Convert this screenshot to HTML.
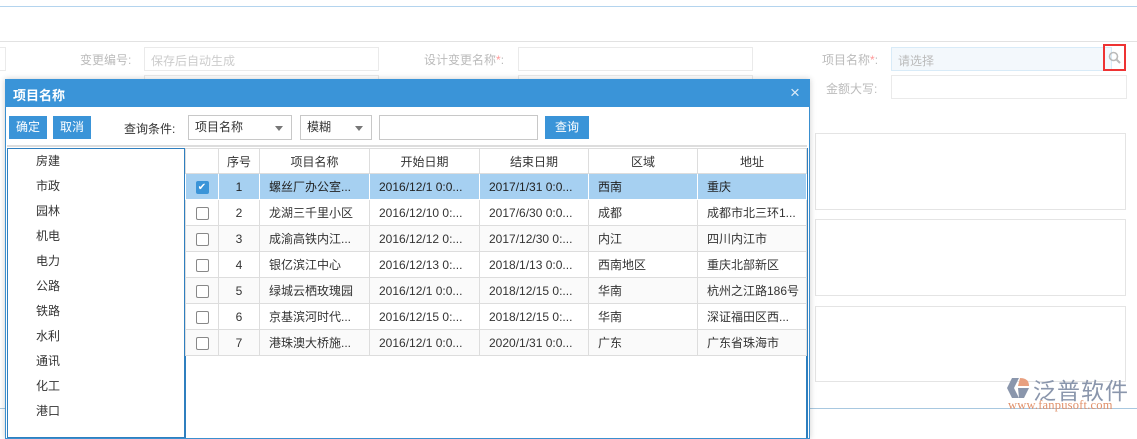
<!DOCTYPE html>
<html><head><meta charset="utf-8"><style>
*{box-sizing:border-box;margin:0;padding:0}
body{width:1137px;height:420px;overflow:hidden;background:#fff;font-family:"Liberation Sans","Noto Sans CJK SC",sans-serif;font-size:12px;position:relative;color:#333}
.a{position:absolute}
.lbl{color:#bbb;font-size:12px}
.inp{border:1px solid #eaeaea;background:#fff}
.box{border:1px solid #e4e4e4}
.btn{background:#3a94d8;color:#fff;text-align:center;line-height:23px;height:23px}
.sel{border:1px solid #c8c8c8;height:25px;line-height:23px;padding-left:6px;color:#333;background:#fff}
.tri{position:absolute;right:8px;top:10px;width:0;height:0;border-left:4px solid transparent;border-right:4px solid transparent;border-top:5px solid #777}
table{border-collapse:collapse;position:absolute;left:185px;top:148px;table-layout:fixed;width:621px}
td{border:1px solid #ddd;height:26px;padding:0 0 0 9px;white-space:nowrap;overflow:hidden;font-size:12px}
.hd td{text-align:center;background:#fff;height:25px;padding:0}
tr.sel1 td{background:#a6d0f1;border-color:#fff;color:#222}
.cb{display:inline-block;width:13px;height:13px;border:1px solid #888;border-radius:2px;vertical-align:middle;background:#fff}
.cbk{background:#3a94d8;border-color:#3a94d8;color:#fff;font-size:10px;line-height:11px;text-align:center}
.c{text-align:center;padding:0!important}
.tree div{height:25px;line-height:25px;padding-left:28px}
</style></head><body>
<div class="a" style="left:0;top:6px;width:1137px;height:1px;background:#b4d4ee"></div>
<div class="a" style="left:0;top:41px;width:1137px;height:1px;background:#e2e2e2"></div>
<div class="a inp" style="left:-5px;top:47px;width:11px;height:24px"></div>
<div class="a lbl" style="left:80px;top:51px">变更编号:</div>
<div class="a inp" style="left:144px;top:47px;width:235px;height:24px;color:#ccc;padding:4px 6px">保存后自动生成</div>
<div class="a inp" style="left:144px;top:75px;width:235px;height:24px"></div>
<div class="a lbl" style="left:424px;top:51px">设计变更名称<span style="color:#f99">*</span>:</div>
<div class="a inp" style="left:518px;top:47px;width:235px;height:24px"></div>
<div class="a inp" style="left:518px;top:75px;width:235px;height:24px"></div>
<div class="a lbl" style="left:822px;top:51px">项目名称<span style="color:#f99">*</span>:</div>
<div class="a" style="left:891px;top:47px;width:221px;height:24px;border:1px solid #d8ebf8;background:#f3f8fc;color:#bbb;padding:4px 6px">请选择</div>
<div class="a" style="left:1103px;top:44px;width:23px;height:27px;border:2px solid #e33"></div>
<svg class="a" style="left:1108px;top:51px" width="13" height="13" viewBox="0 0 13 13"><circle cx="5.5" cy="5.5" r="4" fill="none" stroke="#bbb" stroke-width="1.6"/><path d="M8.5 8.5L12 12" stroke="#bbb" stroke-width="2"/></svg>
<div class="a lbl" style="left:826px;top:80px">金额大写:</div>
<div class="a inp" style="left:891px;top:75px;width:236px;height:24px"></div>
<div class="a box" style="left:815px;top:133px;width:311px;height:77px"></div>
<div class="a box" style="left:815px;top:219px;width:311px;height:77px"></div>
<div class="a box" style="left:815px;top:306px;width:311px;height:76px"></div>
<div class="a" style="left:0;top:408px;width:1137px;height:1px;background:#a8c8e0"></div>
<svg class="a" style="left:1007px;top:376px" width="24" height="24" viewBox="0 0 24 24"><path d="M5 2L12 2 7 12 12 22 5 22 0 12Z" fill="#8a96ac"/><path d="M13 2Q22 2 22 10L11 10Z" fill="#e8a080"/><path d="M11 12L22 12 17 22 12 22Z" fill="#8a96ac"/></svg>
<div class="a" style="left:1033px;top:372px;font-size:23px;color:#8a96ac;letter-spacing:1px">泛普软件</div>
<div class="a" style="left:1008px;top:398px;font-size:12.5px;color:#e0906a;font-family:'Liberation Serif',serif;letter-spacing:0.2px">www.fanpusoft.com</div>

<div class="a" style="left:5px;top:79px;width:805px;height:360px;background:#fff;border:1px solid #3a8fcf;box-shadow:0 0 6px rgba(0,0,0,.2)"></div>
<div class="a" style="left:5px;top:79px;width:805px;height:28px;background:#3a94d8;color:#fff;font-weight:bold;font-size:13px;padding:6px 8px">项目名称</div>
<div class="a" style="left:790px;top:83px;color:#dbeaf7;font-size:17px">×</div>
<div class="a btn" style="left:9px;top:116px;width:38px">确定</div>
<div class="a btn" style="left:53px;top:116px;width:38px">取消</div>
<div class="a" style="left:124px;top:120px">查询条件:</div>
<div class="a sel" style="left:188px;top:115px;width:104px">项目名称<span class="tri"></span></div>
<div class="a sel" style="left:300px;top:115px;width:72px">模糊<span class="tri"></span></div>
<div class="a" style="left:379px;top:115px;width:159px;height:25px;border:1px solid #c8c8c8"></div>
<div class="a btn" style="left:545px;top:116px;width:44px">查询</div>
<div class="a" style="left:7px;top:145px;width:800px;height:2px;background:#ddd"></div>
<div class="a tree" style="left:7px;top:148px;width:179px;height:290px;border:1px solid #2f7fbf;border-right:2px solid #2f7fbf">
<div>房建</div><div>市政</div><div>园林</div><div>机电</div><div>电力</div><div>公路</div><div>铁路</div><div>水利</div><div>通讯</div><div>化工</div><div>港口</div></div>
<div class="a" style="left:806px;top:148px;width:2px;height:290px;background:#2f7fbf"></div>
<div class="a" style="left:185px;top:148px;width:622px;height:1px;background:#2f7fbf"></div>
<table>
<colgroup><col style="width:33px"><col style="width:41px"><col style="width:110px"><col style="width:110px"><col style="width:109px"><col style="width:109px"><col style="width:109px"></colgroup>
<tr class="hd"><td></td><td>序号</td><td>项目名称</td><td>开始日期</td><td>结束日期</td><td>区域</td><td>地址</td></tr>
<tr class="sel1"><td class="c"><span class="cb cbk">✔</span></td><td class="c">1</td><td>螺丝厂办公室...</td><td>2016/12/1 0:0...</td><td>2017/1/31 0:0...</td><td>西南</td><td>重庆</td></tr>
<tr><td class="c"><span class="cb"></span></td><td class="c">2</td><td>龙湖三千里小区</td><td>2016/12/10 0:...</td><td>2017/6/30 0:0...</td><td>成都</td><td>成都市北三环1...</td></tr>
<tr style="background:#fafafa"><td class="c"><span class="cb"></span></td><td class="c">3</td><td>成渝高铁内江...</td><td>2016/12/12 0:...</td><td>2017/12/30 0:...</td><td>内江</td><td>四川内江市</td></tr>
<tr><td class="c"><span class="cb"></span></td><td class="c">4</td><td>银亿滨江中心</td><td>2016/12/13 0:...</td><td>2018/1/13 0:0...</td><td>西南地区</td><td>重庆北部新区</td></tr>
<tr style="background:#fafafa"><td class="c"><span class="cb"></span></td><td class="c">5</td><td>绿城云栖玫瑰园</td><td>2016/12/1 0:0...</td><td>2018/12/15 0:...</td><td>华南</td><td>杭州之江路186号</td></tr>
<tr><td class="c"><span class="cb"></span></td><td class="c">6</td><td>京基滨河时代...</td><td>2016/12/15 0:...</td><td>2018/12/15 0:...</td><td>华南</td><td>深证福田区西...</td></tr>
<tr style="background:#fafafa"><td class="c"><span class="cb"></span></td><td class="c">7</td><td>港珠澳大桥施...</td><td>2016/12/1 0:0...</td><td>2020/1/31 0:0...</td><td>广东</td><td>广东省珠海市</td></tr>
</table>
</body></html>
